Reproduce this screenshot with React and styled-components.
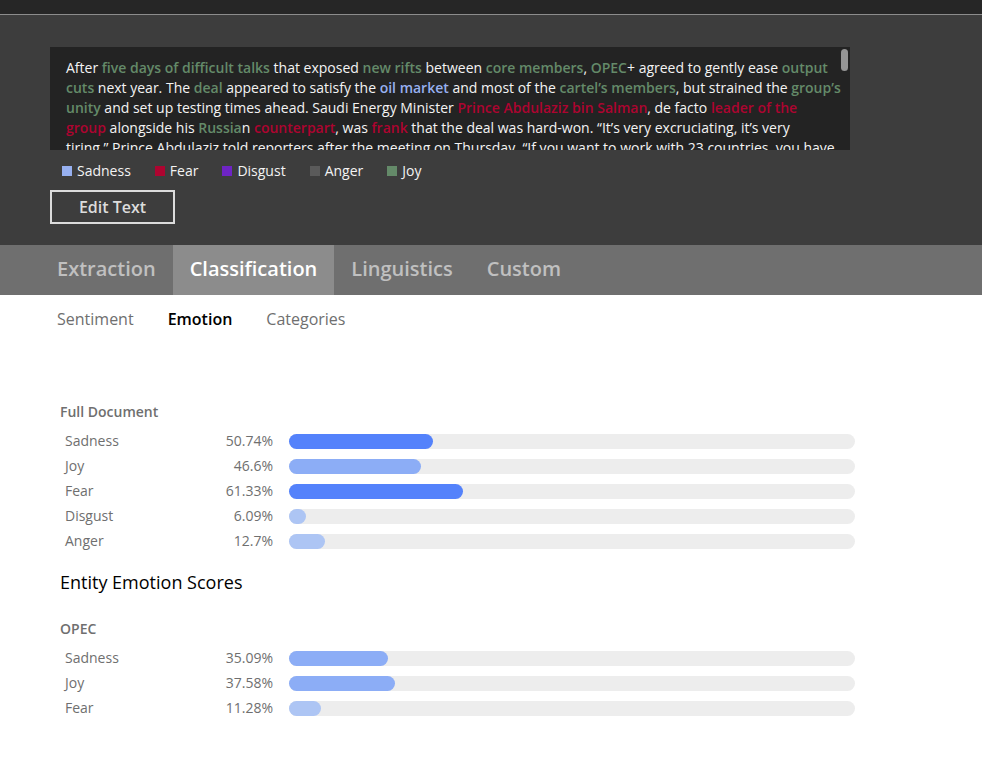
import React from "react";
import styled, { createGlobalStyle } from "styled-components";

const tones = {
  sadness: "#97b0f0",
  fear: "#ad0430",
  disgust: "#6e24c4",
  anger: "#5a5a5a",
  joy: "#648a69",
};

const GlobalStyle = createGlobalStyle`
  *, *::before, *::after { box-sizing: border-box; }
  body {
    margin: 0;
    background: #fff;
    color: #6f6f6f;
    font-family: "Open Sans", "Noto Sans", sans-serif;
    font-size: 14px;
    line-height: 20px;
  }
  h2, h3, p, ul { margin: 0; padding: 0; }
  ul { list-style: none; }
  button { font-family: inherit; cursor: pointer; }
`;

const TopBar = styled.header`
  height: 15px;
  background: #262626;
  border-bottom: 1px solid #8c8c8c;
`;

const InputSection = styled.section`
  padding: 32px 50px 21px;
  background: #3d3d3d;
`;

const TextPanel = styled.div`
  position: relative;
  max-width: 800px;
  background: #232323;
`;

const TextScroll = styled.div`
  height: 103px;
  padding: 11px 8px 0 16px;
  overflow-y: auto;
  scrollbar-width: none;
  color: #f3f3f3;
  font-size: 14px;
  line-height: 20px;
`;

const ScrollThumb = styled.span`
  position: absolute;
  top: 2px;
  right: 2px;
  width: 7px;
  height: 22px;
  border-radius: 4px;
  background: #959595;
`;

const Mark = styled.strong`
  color: ${({ $tone }) => tones[$tone]};
  font-weight: 600;
`;

const Legend = styled.ul`
  display: flex;
  flex-wrap: wrap;
  gap: 24px;
  padding: 11px 12px 9px;
`;

const LegendItem = styled.li`
  display: flex;
  align-items: center;
  gap: 5px;
  color: #f3f3f3;

  &::before {
    content: "";
    width: 10px;
    height: 10px;
    background: ${({ $tone }) => tones[$tone]};
  }
`;

const EditButton = styled.button`
  display: block;
  min-width: 125px;
  height: 34px;
  padding: 0 24px;
  border: 2px solid #dcdcdc;
  background: transparent;
  color: #dcdcdc;
  font-size: 16px;
  font-weight: 600;
  line-height: 20px;
`;

const TabBar = styled.div`
  display: flex;
  padding: 0 40px;
  background: #6f6f6f;
`;

const Tab = styled.button`
  height: 50px;
  padding: 0 17px 2px;
  border: 0;
  background: ${({ $active }) => ($active ? "#8c8c8c" : "transparent")};
  color: ${({ $active }) => ($active ? "#fff" : "#c0c0c0")};
  font-size: 20px;
  font-weight: 600;
  line-height: 24px;
`;

const SubTabBar = styled.div`
  display: flex;
  padding: 0 40px;
`;

const SubTab = styled.button`
  height: 50px;
  padding: 0 17px 2px;
  border: 0;
  background: transparent;
  color: ${({ $active }) => ($active ? "#000" : "#6f6f6f")};
  font-size: 16px;
  font-weight: ${({ $active }) => ($active ? 600 : 400)};
`;

const Results = styled.main`
  max-width: 915px;
  padding: 57px 60px 40px;
`;

const SectionTitle = styled.h2`
  padding: 19px 0 25px;
  color: #000;
  font-size: 18px;
  font-weight: 400;
  line-height: 24px;
`;

const GroupTitle = styled.h3`
  margin-bottom: 9px;
  font-size: 14px;
  font-weight: 600;
  line-height: 20px;
`;

const ScoreList = styled.ul`
  display: grid;
  gap: 5px;
`;

const ScoreRow = styled.li`
  display: grid;
  grid-template-columns: 128px 80px 1fr;
  align-items: center;
  padding-left: 5px;
`;

const ScoreValue = styled.span`
  text-align: right;
`;

const Track = styled.div`
  height: 15px;
  margin-left: 16px;
  border-radius: 8px;
  background: #ededed;
`;

const fillFor = (score) =>
  score >= 50 ? "#5482fb" : score >= 25 ? "#8cadf6" : "#adc5f4";

const Fill = styled.div`
  height: 100%;
  border-radius: 8px;
  background: ${({ $score }) => fillFor($score)};
`;

const legend = [
  ["sadness", "Sadness"],
  ["fear", "Fear"],
  ["disgust", "Disgust"],
  ["anger", "Anger"],
  ["joy", "Joy"],
];

const documentScores = [
  ["Sadness", 50.74],
  ["Joy", 46.6],
  ["Fear", 61.33],
  ["Disgust", 6.09],
  ["Anger", 12.7],
];

const opecScores = [
  ["Sadness", 35.09],
  ["Joy", 37.58],
  ["Fear", 11.28],
];

function ScoreGroup({ title, scores }) {
  return (
    <section>
      <GroupTitle>{title}</GroupTitle>
      <ScoreList>
        {scores.map(([name, score]) => (
          <ScoreRow key={name}>
            <span>{name}</span>
            <ScoreValue>{score}%</ScoreValue>
            <Track>
              <Fill $score={score} style={{ width: `${score / 2}%` }} />
            </Track>
          </ScoreRow>
        ))}
      </ScoreList>
    </section>
  );
}

function Article() {
  return (
    <p>
      After <Mark $tone="joy">five days of difficult talks</Mark> that exposed{" "}
      <Mark $tone="joy">new rifts</Mark> between{" "}
      <Mark $tone="joy">core members</Mark>, <Mark $tone="joy">OPEC</Mark>+
      agreed to gently ease <Mark $tone="joy">output</Mark>
      <br />
      <Mark $tone="joy">cuts</Mark> next year. The{" "}
      <Mark $tone="joy">deal</Mark> appeared to satisfy the{" "}
      <Mark $tone="sadness">oil market</Mark> and most of the{" "}
      <Mark $tone="joy">cartel’s members</Mark>, but strained the{" "}
      <Mark $tone="joy">group’s</Mark>
      <br />
      <Mark $tone="joy">unity</Mark> and set up testing times ahead. Saudi
      Energy Minister <Mark $tone="fear">Prince Abdulaziz bin Salman</Mark>, de
      facto <Mark $tone="fear">leader of the</Mark>
      <br />
      <Mark $tone="fear">group</Mark> alongside his{" "}
      <Mark $tone="joy">Russia</Mark>n <Mark $tone="fear">counterpart</Mark>,
      was <Mark $tone="fear">frank</Mark> that the deal was hard-won. “It’s very
      excruciating, it’s very
      <br />
      tiring,” Prince Abdulaziz told reporters after the meeting on Thursday.
      “If you want to work with 23 countries, you have
    </p>
  );
}

export default function App() {
  return (
    <>
      <GlobalStyle />
      <TopBar />
      <InputSection>
        <TextPanel>
          <TextScroll>
            <Article />
          </TextScroll>
          <ScrollThumb />
        </TextPanel>
        <Legend>
          {legend.map(([tone, name]) => (
            <LegendItem key={tone} $tone={tone}>
              {name}
            </LegendItem>
          ))}
        </Legend>
        <EditButton type="button">Edit Text</EditButton>
      </InputSection>
      <TabBar role="tablist">
        {["Extraction", "Classification", "Linguistics", "Custom"].map((name) => (
          <Tab
            key={name}
            type="button"
            role="tab"
            aria-selected={name === "Classification"}
            $active={name === "Classification"}
          >
            {name}
          </Tab>
        ))}
      </TabBar>
      <SubTabBar role="tablist">
        {["Sentiment", "Emotion", "Categories"].map((name) => (
          <SubTab
            key={name}
            type="button"
            role="tab"
            aria-selected={name === "Emotion"}
            $active={name === "Emotion"}
          >
            {name}
          </SubTab>
        ))}
      </SubTabBar>
      <Results>
        <ScoreGroup title="Full Document" scores={documentScores} />
        <SectionTitle>Entity Emotion Scores</SectionTitle>
        <ScoreGroup title="OPEC" scores={opecScores} />
      </Results>
    </>
  );
}
